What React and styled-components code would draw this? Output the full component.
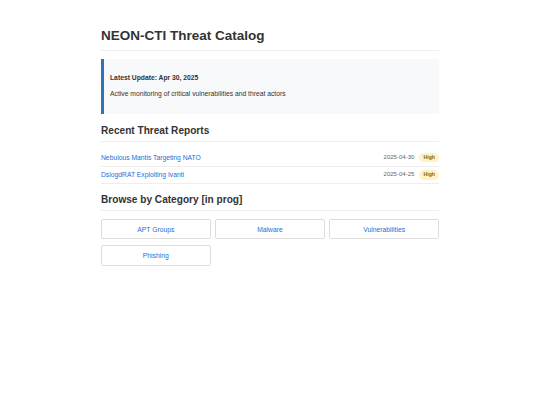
import React from "react";
import styled, { createGlobalStyle } from "styled-components";

const Global = createGlobalStyle`
  html, body { margin: 0; padding: 0; background: #fff; }
  body {
    font-family: "Liberation Sans", Arial, Helvetica, sans-serif;
    font-size: 6.75px;
    color: #333;
  }
`;

const Page = styled.div`
  width: 338px;
  margin: 0 auto;
  padding-top: 28px;
`;

const Title = styled.h1`
  margin: 0;
  font-size: 13.5px;
  line-height: 16.2px;
  font-weight: 700;
  color: #333;
  padding-bottom: 5.5px;
  border-bottom: 1px solid #eee;
`;

const Callout = styled.div`
  margin-top: 8.3px;
  background: #f8f9fa;
  border-left: 3px solid #2f74b5;
  padding: 13.5px 8px 14.8px 6px;
`;

const CalloutTitle = styled.h3`
  margin: 0 0 6.9px;
  font-size: 6.75px;
  line-height: 9.8px;
  font-weight: 700;
`;

const CalloutText = styled.p`
  margin: 0;
  font-size: 6.75px;
  line-height: 9.8px;
`;

const SectionTitle = styled.h2`
  margin: ${(p) => p.$top}px 0 0;
  font-size: 10.1px;
  line-height: 12.1px;
  font-weight: 700;
  color: #333;
  padding-bottom: 4.4px;
  border-bottom: 1px solid #eee;
`;

const List = styled.ul`
  list-style: none;
  margin: 6.8px 0 0;
  padding: 0;
`;

const Row = styled.li`
  display: flex;
  align-items: center;
  justify-content: space-between;
  padding: 3.6px 0;
  border-bottom: 1px solid #eee;
  line-height: 9.45px;
`;

const Link = styled.a`
  color: #1a6fd6;
  text-decoration: none;
  font-size: 6.75px;
`;

const Meta = styled.div`
  display: flex;
  align-items: center;
  gap: 5px;
`;

const DateText = styled.span`
  color: #666;
  font-size: 6.05px;
`;

const Badge = styled.span`
  display: inline-flex;
  align-items: center;
  height: 9.4px;
  padding: 0 4px;
  border-radius: 5px;
  background: #fff3c4;
  color: #8a6200;
  font-size: 5.2px;
  font-weight: 700;
`;

const Grid = styled.div`
  margin-top: 8px;
  display: grid;
  grid-template-columns: repeat(3, 1fr);
  column-gap: 4.7px;
  row-gap: 6px;
`;

const CatButton = styled.a`
  display: flex;
  align-items: center;
  justify-content: center;
  height: 20.3px;
  box-sizing: border-box;
  border: 1px solid #ddd;
  border-radius: 2px;
  background: #fff;
  color: #1a6fd6;
  font-size: 6.75px;
  text-decoration: none;
`;

const reports = [
  { title: "Nebulous Mantis Targeting NATO", date: "2025-04-30", sev: "High" },
  { title: "DslogdRAT Exploiting Ivanti", date: "2025-04-25", sev: "High" },
];

const categories = ["APT Groups", "Malware", "Vulnerabilities", "Phishing"];

export default function App() {
  return (
    <>
      <Global />
      <Page>
        <Title>NEON-CTI Threat Catalog</Title>
        <Callout>
          <CalloutTitle>Latest Update: Apr 30, 2025</CalloutTitle>
          <CalloutText>Active monitoring of critical vulnerabilities and threat actors</CalloutText>
        </Callout>
        <SectionTitle $top={11}>Recent Threat Reports</SectionTitle>
        <List>
          {reports.map((r) => (
            <Row key={r.title}>
              <Link href="#">{r.title}</Link>
              <Meta>
                <DateText>{r.date}</DateText>
                <Badge>{r.sev}</Badge>
              </Meta>
            </Row>
          ))}
        </List>
        <SectionTitle $top={9.3}>Browse by Category [in prog]</SectionTitle>
        <Grid>
          {categories.map((c) => (
            <CatButton key={c} href="#">{c}</CatButton>
          ))}
        </Grid>
      </Page>
    </>
  );
}
